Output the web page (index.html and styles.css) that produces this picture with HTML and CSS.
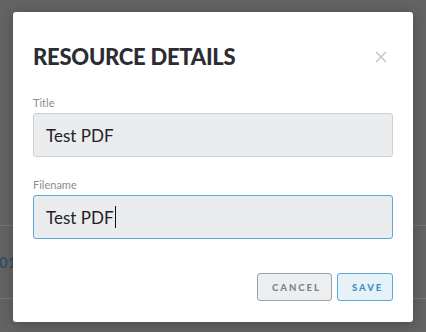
FILE: index.html
```html
<!DOCTYPE html>
<html lang="en">
  <head>
    <meta charset="UTF-8" />
    <title>Resource Details</title>
    <link rel="stylesheet" href="styles.css">
  </head>
  <body>
    <div class="page">
      <div class="row"><span class="row-id">01</span></div>
      <div class="row row-last"></div>
    </div>

    <div class="overlay">
      <div class="modal">
        <div class="modal-header">
          <h1>RESOURCE DETAILS</h1>
          <button class="close" aria-label="Close">
            <svg width="12" height="12" viewBox="0 0 12 12">
              <path d="M1 1 L11 11 M11 1 L1 11" stroke="#c3c7cb" stroke-width="1.6" fill="none" />
            </svg>
          </button>
        </div>

        <div class="field">
          <label>Title</label>
          <div class="input">Test PDF</div>
        </div>

        <div class="field">
          <label>Filename</label>
          <div class="input focused">Test PDF<span class="caret"></span></div>
        </div>

        <div class="actions">
          <button class="btn btn-cancel">CANCEL</button>
          <button class="btn btn-save">SAVE</button>
        </div>
      </div>
    </div>
  </body>
</html>
```

FILE: styles.css
```css
* {
  margin: 0;
  padding: 0;
  box-sizing: border-box;
}

html {
  overflow: hidden;
}

body {
  font-family: "Lato", "Open Sans", sans-serif;
  background-color: #636363;
  width: 426px;
  height: 332px;
  overflow: hidden;
}

.page {
  padding-top: 225px;
}

.row {
  height: 73px;
  border-top: 1px solid #777;
}

.row-last {
  height: 34px;
}

.row-id {
  display: block;
  padding-top: 27px;
  font-size: 15px;
  line-height: 18px;
  font-weight: 700;
  color: #2f4f66;
  margin-left: -1px;
}

.overlay {
  position: absolute;
  top: 0;
  left: 0;
  width: 426px;
  height: 332px;
}

.modal {
  position: absolute;
  top: 12px;
  left: 13px;
  width: 400px;
  height: 310px;
  background-color: #fff;
  border-radius: 3px;
  box-shadow: 0 2px 12px rgba(0, 0, 0, 0.25);
  padding: 32px 20px 0 20px;
}

.modal-header {
  display: flex;
  justify-content: space-between;
  align-items: center;
  margin-bottom: 26px;
}

.modal-header h1 {
  font-size: 22px;
  line-height: 26px;
  font-weight: 900;
  color: #2b2d33;
  letter-spacing: -0.25px;
}

.close {
  background: none;
  border: none;
  width: 12px;
  height: 12px;
  margin-right: 6px;
  display: flex;
}

.field {
  margin-bottom: 21px;
}

.field label {
  display: block;
  font-size: 11px;
  line-height: 13px;
  color: #8a8d91;
  margin-bottom: 4px;
}

.input {
  height: 44px;
  background-color: #ebecee;
  border: 1px solid #cdd0d3;
  border-radius: 3px;
  padding: 0 12px;
  display: flex;
  align-items: center;
  font-size: 17px;
  color: #1f2226;
}

.input.focused {
  border-color: #5aa8d4;
}

.caret {
  display: inline-block;
  width: 1px;
  height: 22px;
  background-color: #111;
  margin-left: 1px;
}

.actions {
  display: flex;
  justify-content: flex-end;
  gap: 5px;
  margin-top: 34px;
}

.btn {
  height: 28px;
  border-radius: 3px;
  font-family: "Lato", sans-serif;
  font-size: 9.5px;
  font-weight: 900;
  letter-spacing: 2px;
  padding: 0 12px 0 14px;
}

.btn-cancel {
  width: 75px;
  background-color: #eceef0;
  border: 1px solid #9ca1a6;
  color: #7b838b;
}

.btn-save {
  width: 56px;
  background-color: #e6f1f8;
  border: 1px solid #5aa8d4;
  color: #3d94c4;
}
```
